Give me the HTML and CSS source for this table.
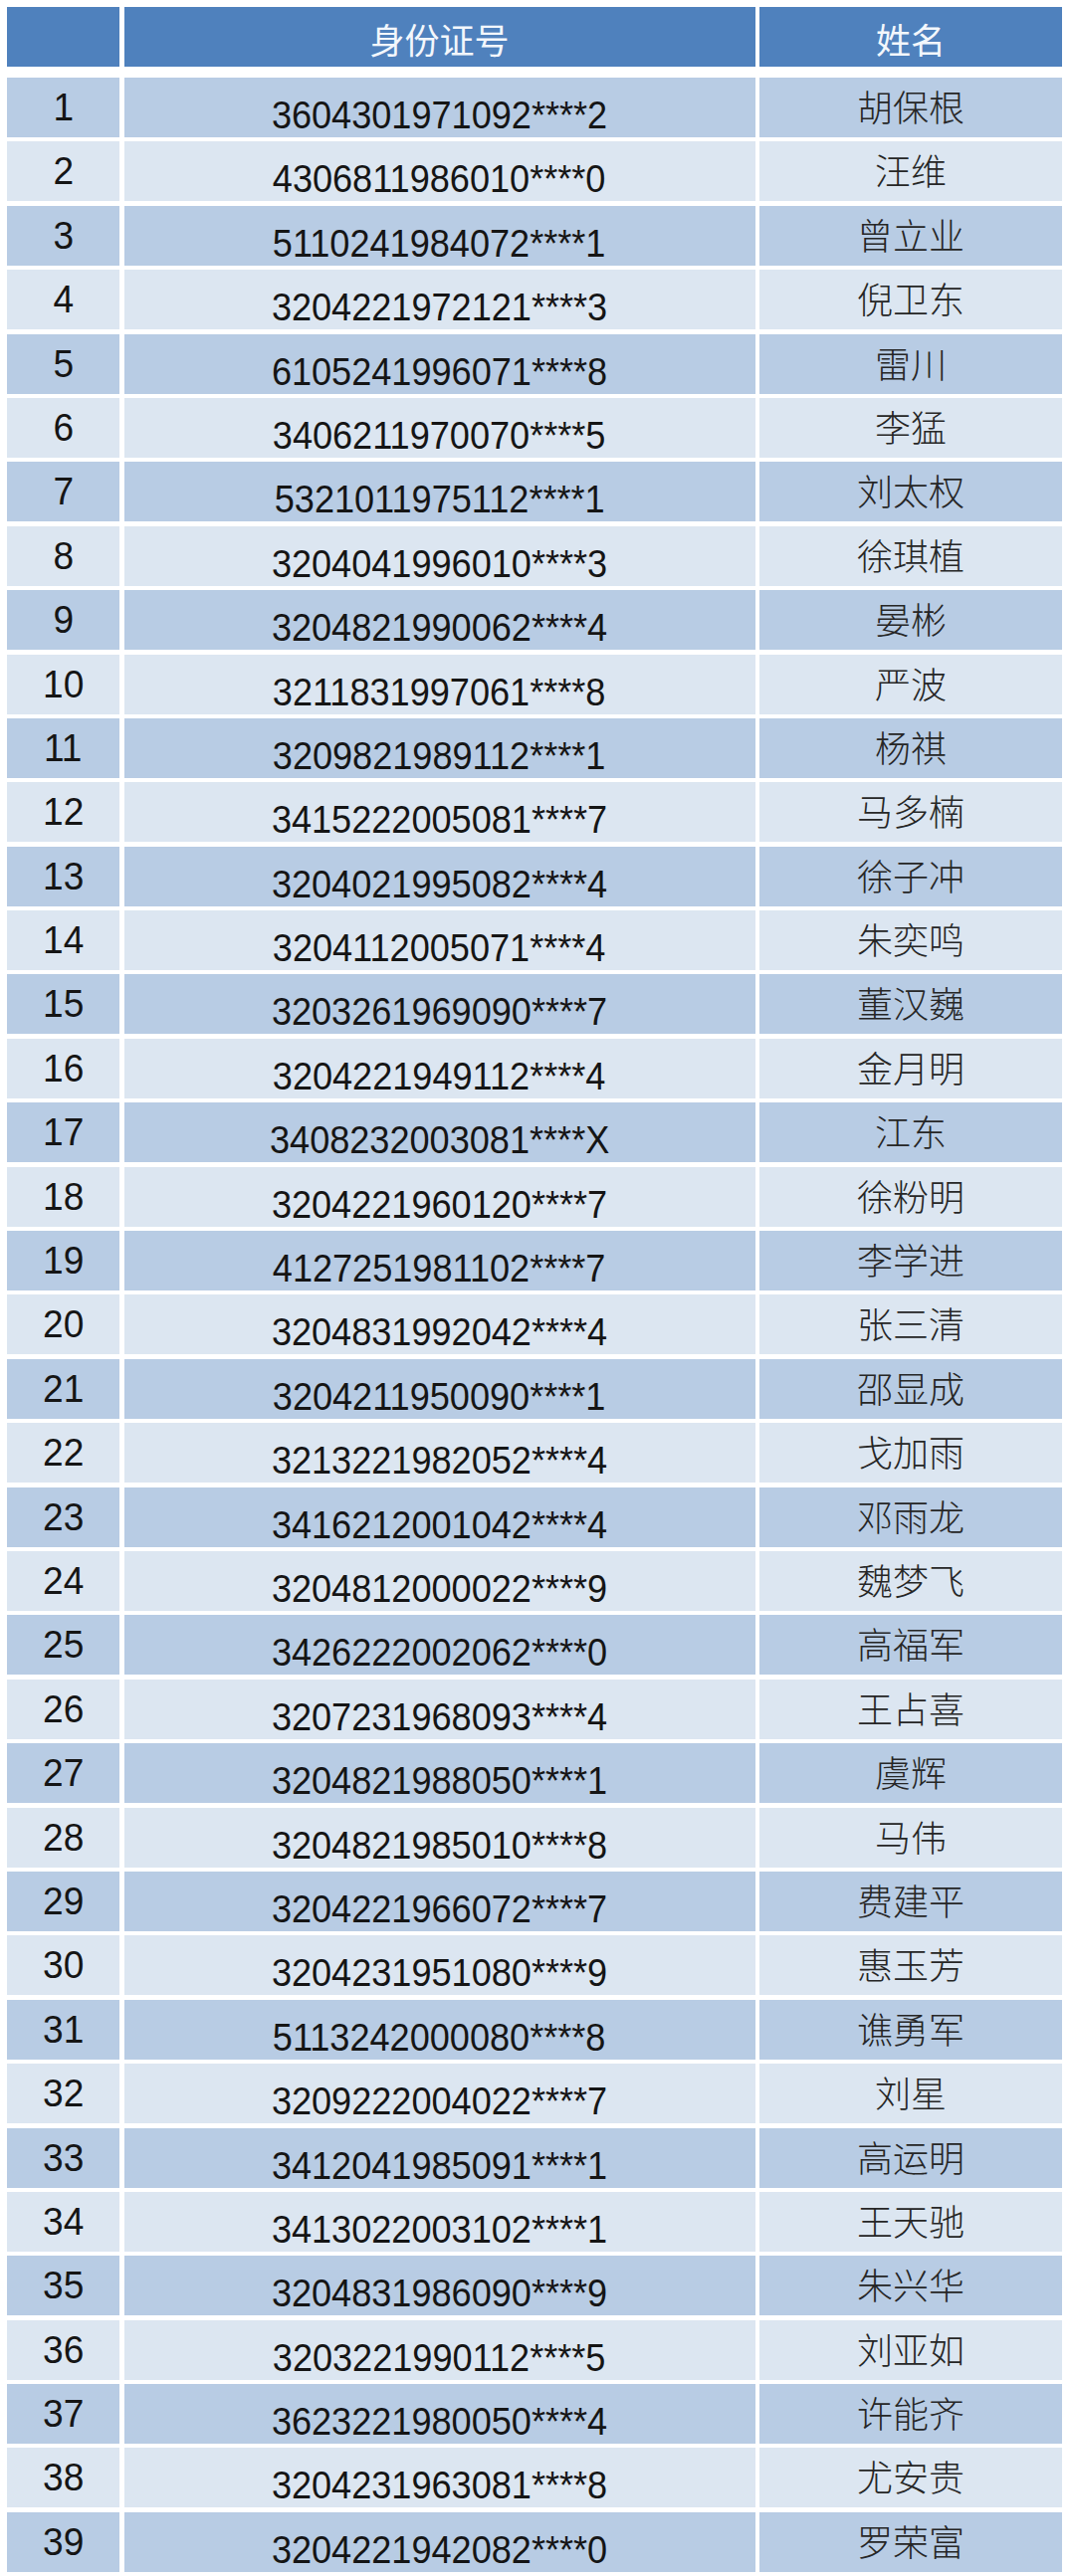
FILE: index.html
```html
<!DOCTYPE html>
<html lang="zh-CN">
<head>
<meta charset="utf-8">
<title>名单</title>
<link rel="stylesheet" href="styles.css">
</head>
<body>
<div class="table">
  <div class="row head">
    <div class="cell c1"></div>
    <div class="cell c2">身份证号</div>
    <div class="cell c3">姓名</div>
  </div>
  <div class="body">
    <div class="row"><div class="cell c1"><span>1</span></div><div class="cell c2"><span>3604301971092****2</span></div><div class="cell c3">胡保根</div></div>
    <div class="row"><div class="cell c1"><span>2</span></div><div class="cell c2"><span>4306811986010****0</span></div><div class="cell c3">汪维</div></div>
    <div class="row"><div class="cell c1"><span>3</span></div><div class="cell c2"><span>5110241984072****1</span></div><div class="cell c3">曾立业</div></div>
    <div class="row"><div class="cell c1"><span>4</span></div><div class="cell c2"><span>3204221972121****3</span></div><div class="cell c3">倪卫东</div></div>
    <div class="row"><div class="cell c1"><span>5</span></div><div class="cell c2"><span>6105241996071****8</span></div><div class="cell c3">雷川</div></div>
    <div class="row"><div class="cell c1"><span>6</span></div><div class="cell c2"><span>3406211970070****5</span></div><div class="cell c3">李猛</div></div>
    <div class="row"><div class="cell c1"><span>7</span></div><div class="cell c2"><span>5321011975112****1</span></div><div class="cell c3">刘太权</div></div>
    <div class="row"><div class="cell c1"><span>8</span></div><div class="cell c2"><span>3204041996010****3</span></div><div class="cell c3">徐琪植</div></div>
    <div class="row"><div class="cell c1"><span>9</span></div><div class="cell c2"><span>3204821990062****4</span></div><div class="cell c3">晏彬</div></div>
    <div class="row"><div class="cell c1"><span>10</span></div><div class="cell c2"><span>3211831997061****8</span></div><div class="cell c3">严波</div></div>
    <div class="row"><div class="cell c1"><span>11</span></div><div class="cell c2"><span>3209821989112****1</span></div><div class="cell c3">杨祺</div></div>
    <div class="row"><div class="cell c1"><span>12</span></div><div class="cell c2"><span>3415222005081****7</span></div><div class="cell c3">马多楠</div></div>
    <div class="row"><div class="cell c1"><span>13</span></div><div class="cell c2"><span>3204021995082****4</span></div><div class="cell c3">徐子冲</div></div>
    <div class="row"><div class="cell c1"><span>14</span></div><div class="cell c2"><span>3204112005071****4</span></div><div class="cell c3">朱奕鸣</div></div>
    <div class="row"><div class="cell c1"><span>15</span></div><div class="cell c2"><span>3203261969090****7</span></div><div class="cell c3">董汉巍</div></div>
    <div class="row"><div class="cell c1"><span>16</span></div><div class="cell c2"><span>3204221949112****4</span></div><div class="cell c3">金月明</div></div>
    <div class="row"><div class="cell c1"><span>17</span></div><div class="cell c2"><span>3408232003081****X</span></div><div class="cell c3">江东</div></div>
    <div class="row"><div class="cell c1"><span>18</span></div><div class="cell c2"><span>3204221960120****7</span></div><div class="cell c3">徐粉明</div></div>
    <div class="row"><div class="cell c1"><span>19</span></div><div class="cell c2"><span>4127251981102****7</span></div><div class="cell c3">李学进</div></div>
    <div class="row"><div class="cell c1"><span>20</span></div><div class="cell c2"><span>3204831992042****4</span></div><div class="cell c3">张三清</div></div>
    <div class="row"><div class="cell c1"><span>21</span></div><div class="cell c2"><span>3204211950090****1</span></div><div class="cell c3">邵显成</div></div>
    <div class="row"><div class="cell c1"><span>22</span></div><div class="cell c2"><span>3213221982052****4</span></div><div class="cell c3">戈加雨</div></div>
    <div class="row"><div class="cell c1"><span>23</span></div><div class="cell c2"><span>3416212001042****4</span></div><div class="cell c3">邓雨龙</div></div>
    <div class="row"><div class="cell c1"><span>24</span></div><div class="cell c2"><span>3204812000022****9</span></div><div class="cell c3">魏梦飞</div></div>
    <div class="row"><div class="cell c1"><span>25</span></div><div class="cell c2"><span>3426222002062****0</span></div><div class="cell c3">高福军</div></div>
    <div class="row"><div class="cell c1"><span>26</span></div><div class="cell c2"><span>3207231968093****4</span></div><div class="cell c3">王占喜</div></div>
    <div class="row"><div class="cell c1"><span>27</span></div><div class="cell c2"><span>3204821988050****1</span></div><div class="cell c3">虞辉</div></div>
    <div class="row"><div class="cell c1"><span>28</span></div><div class="cell c2"><span>3204821985010****8</span></div><div class="cell c3">马伟</div></div>
    <div class="row"><div class="cell c1"><span>29</span></div><div class="cell c2"><span>3204221966072****7</span></div><div class="cell c3">费建平</div></div>
    <div class="row"><div class="cell c1"><span>30</span></div><div class="cell c2"><span>3204231951080****9</span></div><div class="cell c3">惠玉芳</div></div>
    <div class="row"><div class="cell c1"><span>31</span></div><div class="cell c2"><span>5113242000080****8</span></div><div class="cell c3">谯勇军</div></div>
    <div class="row"><div class="cell c1"><span>32</span></div><div class="cell c2"><span>3209222004022****7</span></div><div class="cell c3">刘星</div></div>
    <div class="row"><div class="cell c1"><span>33</span></div><div class="cell c2"><span>3412041985091****1</span></div><div class="cell c3">高运明</div></div>
    <div class="row"><div class="cell c1"><span>34</span></div><div class="cell c2"><span>3413022003102****1</span></div><div class="cell c3">王天驰</div></div>
    <div class="row"><div class="cell c1"><span>35</span></div><div class="cell c2"><span>3204831986090****9</span></div><div class="cell c3">朱兴华</div></div>
    <div class="row"><div class="cell c1"><span>36</span></div><div class="cell c2"><span>3203221990112****5</span></div><div class="cell c3">刘亚如</div></div>
    <div class="row"><div class="cell c1"><span>37</span></div><div class="cell c2"><span>3623221980050****4</span></div><div class="cell c3">许能齐</div></div>
    <div class="row"><div class="cell c1"><span>38</span></div><div class="cell c2"><span>3204231963081****8</span></div><div class="cell c3">尤安贵</div></div>
    <div class="row"><div class="cell c1"><span>39</span></div><div class="cell c2"><span>3204221942082****0</span></div><div class="cell c3">罗荣富</div></div>
  </div>
</div>
</body>
</html>
```

FILE: styles.css
```css
html, body {
  margin: 0;
  padding: 0;
  background: #ffffff;
}

.table {
  padding: 7px 0 0 7px;
  display: flex;
  flex-direction: column;
  gap: 11px;
}

.body {
  display: flex;
  flex-direction: column;
  gap: 4.4px;
}

.row {
  display: grid;
  grid-template-columns: 113px 634px 304px;
  column-gap: 4.5px;
  height: 60px;
}

.cell {
  text-align: center;
  box-sizing: border-box;
  white-space: nowrap;
  overflow: hidden;
}

.cell span {
  display: inline-block;
  transform: scaleX(0.95);
  transform-origin: center;
}

.body .row:nth-child(odd) .cell {
  background: #b8cce4;
}

.body .row:nth-child(even) .cell {
  background: #dce6f1;
}

.head .cell {
  background: #4f81bd;
  color: #f3f7fc;
  font-family: "Noto Sans CJK SC", sans-serif;
  font-weight: 400;
  font-size: 35px;
  line-height: 35px;
  padding-top: 14px;
}

.body .c1 {
  font-family: "Liberation Sans", Arial, sans-serif;
  font-size: 39px;
  line-height: 39px;
  padding-top: 10px;
  color: #151515;
}

.body .c2 {
  font-family: "Liberation Sans", Arial, sans-serif;
  font-size: 38px;
  line-height: 38px;
  padding-top: 19px;
  color: #151515;
}

.body .c3 {
  font-family: "Noto Sans CJK SC", sans-serif;
  font-weight: 300;
  font-size: 36px;
  line-height: 36px;
  padding-top: 10px;
  color: #262626;
}
```
